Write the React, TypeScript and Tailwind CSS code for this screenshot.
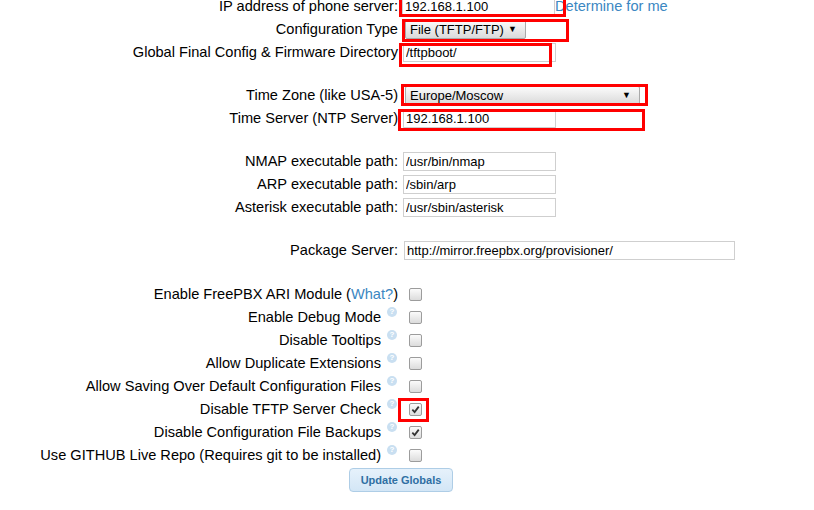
import React from "react";

function Row({ label, children, labelClass = "" }: { label: React.ReactNode; children?: React.ReactNode; labelClass?: string }) {
  return (
    <div className="flex h-[23px] items-center">
      <div className={`w-[400px] shrink-0 pr-[2px] text-right whitespace-nowrap ${labelClass}`}>{label}</div>
      <div className="relative flex h-full items-center">{children}</div>
    </div>
  );
}

function TextBox({ value, w = "w-[153px]", className = "" }: { value: string; w?: string; className?: string }) {
  return (
    <input
      readOnly
      value={value}
      className={`h-[19px] ${w} border border-[#cfcfcf] bg-white pl-[2px] text-[13px] leading-[17px] text-black outline-none ${className}`}
    />
  );
}

function Select({ value, w }: { value: string; w: string }) {
  return (
    <div
      className={`ml-[5px] flex h-[19px] ${w} items-center justify-between rounded-[2px] border border-[#a9a9a9] bg-gradient-to-b from-[#fbfbfb] to-[#dadada] pl-[4px] pr-[8px] text-[13px] text-black`}
    >
      <span>{value}</span>
      <span className="text-[9px] leading-none">▼</span>
    </div>
  );
}

function RedBox({ className }: { className: string }) {
  return <span className={`pointer-events-none absolute z-10 border-[3px] border-[#ff0000] ${className}`} />;
}

function Help() {
  return (
    <span className="relative top-[-6px] ml-[6px] mr-[1px] inline-flex h-[10px] w-[10px] items-center justify-center rounded-full bg-[#c9dff1] align-middle text-[8px] font-bold leading-none text-white">
      ?
    </span>
  );
}

function Check({ checked = false }: { checked?: boolean }) {
  return (
    <span className="ml-[9px] flex h-[13px] w-[13px] items-center justify-center rounded-[2px] border border-[#9c9c9c] bg-gradient-to-b from-[#fbfbfb] to-[#dcdcdc]">
      {checked && (
        <svg viewBox="0 0 10 10" className="h-[9px] w-[9px]">
          <path d="M1.5 5.2 L4 7.8 L8.6 1.8" fill="none" stroke="#333" strokeWidth="2" />
        </svg>
      )}
    </span>
  );
}

const checks: { label: string; checked?: boolean; red?: boolean }[] = [
  { label: "Enable Debug Mode" },
  { label: "Disable Tooltips" },
  { label: "Allow Duplicate Extensions" },
  { label: "Allow Saving Over Default Configuration Files" },
  { label: "Disable TFTP Server Check", checked: true, red: true },
  { label: "Disable Configuration File Backups", checked: true },
  { label: "Use GITHUB Live Repo (Requires git to be installed)" },
];

export default function App() {
  return (
    <div className="h-[510px] w-[814px] overflow-hidden bg-white font-['Liberation_Sans',Arial,sans-serif] text-[14.6px] text-black">
      <div className="-mt-[5px] flex flex-col">
        <Row label="IP address of phone server:">
          <TextBox value="192.168.1.100" className="ml-[2px]" />
          <a className="text-[#3b87c2]">Determine for me</a>
          <RedBox className="left-[-1px] top-[-4px] h-[26px] w-[167px]" />
        </Row>
        <Row label="Configuration Type">
          <Select value="File (TFTP/FTP)" w="w-[121px]" />
          <RedBox className="left-[2px] top-[1px] h-[23px] w-[167px]" />
        </Row>
        <Row label="Global Final Config & Firmware Directory">
          <TextBox value="/tftpboot/" className="ml-[3px]" />
          <RedBox className="left-[-1px] top-[2px] h-[24px] w-[153px]" />
        </Row>
        <div className="h-[20px]" />
        <Row label="Time Zone (like USA-5)">
          <Select value="Europe/Moscow" w="w-[235px]" />
          <RedBox className="left-[1px] top-0 h-[22px] w-[247px]" />
        </Row>
        <Row label="Time Server (NTP Server)">
          <TextBox value="192.168.1.100" className="ml-[3px]" />
          <RedBox className="left-[-2px] top-[2px] h-[22px] w-[247px]" />
        </Row>
        <div className="h-[20px]" />
        <Row label="NMAP executable path:">
          <TextBox value="/usr/bin/nmap" className="ml-[3px]" />
        </Row>
        <Row label="ARP executable path:">
          <TextBox value="/sbin/arp" className="ml-[3px]" />
        </Row>
        <Row label="Asterisk executable path:">
          <TextBox value="/usr/sbin/asterisk" className="ml-[3px]" />
        </Row>
        <div className="h-[20px]" />
        <Row label="Package Server:">
          <TextBox value="http://mirror.freepbx.org/provisioner/" w="w-[331px]" className="ml-[4px]" />
        </Row>
        <div className="h-[21px]" />
        <Row
          label={
            <>
              Enable FreePBX ARI Module (<a className="text-[#3b87c2]">What?</a>)
            </>
          }
        >
          <Check />
        </Row>
        {checks.map((c) => (
          <Row
            key={c.label}
            label={
              <>
                {c.label}
                <Help />
              </>
            }
          >
            <Check checked={c.checked} />
            {c.red && <RedBox className="left-[-2px] top-0 h-[24px] w-[31px]" />}
          </Row>
        ))}
        <div className="mt-[1px] pl-[349px]">
          <button className="h-[24px] w-[104px] rounded-[4px] border border-[#aecde6] bg-gradient-to-b from-[#e6f1fb] to-[#d3e6f6] text-[11px] font-bold text-[#2f6fa3]">
            Update Globals
          </button>
        </div>
      </div>
    </div>
  );
}
